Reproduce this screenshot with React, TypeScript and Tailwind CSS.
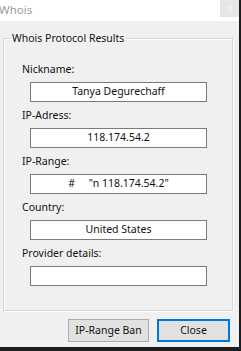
import React from "react";

const fields = [
  { label: "Nickname:", value: "Tanya Degurechaff" },
  { label: "IP-Adress:", value: "118.174.54.2" },
  { label: "IP-Range:", value: "#     \"n 118.174.54.2\"" },
  { label: "Country:", value: "United States" },
  { label: "Provider details:", value: "" },
];

function Field({ label, value }: { label: string; value: string }) {
  return (
    <div className="flex flex-col">
      <div className="h-[14px] leading-[14px] pl-[18px]">{label}</div>
      <div className="ml-[26px] mt-[6px] mb-[6px] w-[177px] h-[20px] bg-white border border-[#7a7a7a] flex items-center justify-center whitespace-pre">
        {value}
      </div>
    </div>
  );
}

export default function App() {
  return (
    <div
      className="w-[241px] h-[351px] flex flex-col bg-[#1c1c1c] text-[10.5px] text-[#111] overflow-hidden"
      style={{ fontFamily: '"Noto Sans", "Open Sans", sans-serif' }}
    >
      <div className="flex flex-1">
        <div className="w-[239px] flex flex-col bg-[#f0f0f0]">
          {/* title bar */}
          <div className="h-[21px] bg-white flex items-start justify-between">
            <div className="text-[11.5px] text-[#9b9b9b] leading-[20px] -ml-[1px]">Whois</div>
            <div className="w-[19px] h-[17px] bg-[#e6e6e6] flex items-center justify-center text-[12px] text-[#f4f4f4] leading-none">
              ×
            </div>
          </div>

          <div className="pt-[10px] flex flex-col">
            <fieldset className="ml-[3px] w-[230px] h-[280px] border border-[#d5d5d5] shadow-[inset_1px_1px_0_#fff,1px_1px_0_#fff] pb-[22px]">
              <legend className="ml-[6px] px-[2px] leading-[14px]">Whois Protocol Results</legend>
              <div className="pt-[17px] flex flex-col">
                {fields.map((f) => (
                  <Field key={f.label} label={f.label} value={f.value} />
                ))}
              </div>
            </fieldset>

            <div className="flex justify-end gap-[8px] mt-[8px] pr-[9px]">
              <button className="w-[81px] h-[23px] bg-[#e1e1e1] border border-[#adadad] text-[10.5px]">
                IP-Range Ban
              </button>
              <button className="w-[73px] h-[23px] bg-[#e1e1e1] border-2 border-[#0078d7] text-[10.5px]">
                Close
              </button>
            </div>
          </div>
        </div>
      </div>
      <div className="h-[4px]"></div>
    </div>
  );
}
